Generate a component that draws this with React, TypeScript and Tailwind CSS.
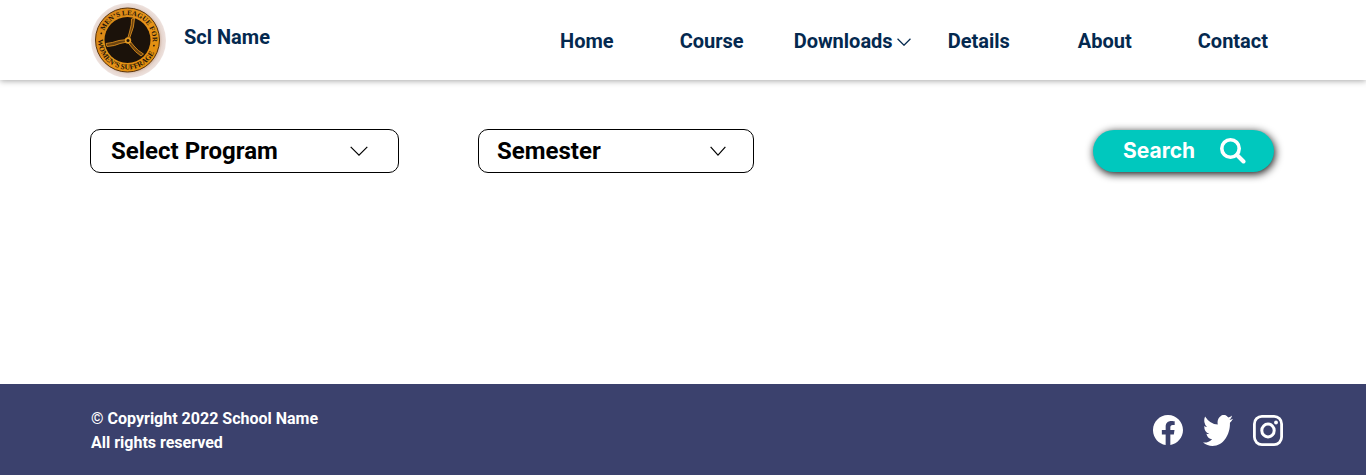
import { BsFacebook, BsTwitter } from "react-icons/bs";

function Chevron({ className }: { className: string }) {
  return (
    <svg viewBox="0 0 18 10" fill="none" stroke="currentColor" preserveAspectRatio="none" aria-hidden="true" className={className}>
      <path d="M0.7 0.9L9 9.1L17.3 0.9" strokeWidth="1.2" vectorEffect="non-scaling-stroke" />
    </svg>
  );
}

function Logo() {
  return (
    <svg viewBox="0 0 76 76" className="size-[76px] shrink-0" role="img" aria-label="Men's League for Women's Suffrage">
      <defs>
        <radialGradient id="rim">
          <stop offset="0.8" stopColor="#c9ab98" />
          <stop offset="0.9" stopColor="#e6d6cf" />
          <stop offset="1" stopColor="#eee2de" />
        </radialGradient>
        <linearGradient id="disc" x1="0" y1="0" x2="1" y2="1">
          <stop offset="0" stopColor="#cf7f14" />
          <stop offset="0.5" stopColor="#e8951a" />
          <stop offset="1" stopColor="#e08c0a" />
        </linearGradient>
        <path id="arcTop" d="M12.500 38A25 25 0 0 1 62.500 38" />
        <path id="arcBottom" d="M8 38A29.500 29.500 0 0 0 67 38" />
      </defs>
      <circle cx="38.500" cy="38.500" r="37.500" fill="url(#rim)" />
      <circle cx="37.500" cy="38" r="32" fill="url(#disc)" stroke="#5a340b" strokeWidth="1" />
      <circle cx="37.500" cy="38" r="23" fill="#1b120a" />
      <g stroke="#d98b1c" strokeWidth="0.9" fill="#6b430f" strokeLinejoin="round">
        <path d="M37.500 37L39.500 30Q42 22 41.500 17L44.500 16Q44 26 41 32L39 38Z" />
        <path d="M37 37.500L29 38.500Q22 41 16 41.500L17 44.500Q25 44 30 41.500L37 40Z" />
        <path d="M37.500 40L41.500 45Q45 50 51 54L53.500 52Q48 49 44 44L40 39Z" />
      </g>
      <circle cx="38" cy="38.500" r="3.200" fill="#e39a22" />
      <circle cx="38" cy="38.500" r="1.500" fill="#20140a" />
      <g fill="#24150a" fontFamily="Liberation Serif, serif" fontWeight="700" transform="rotate(13 37.500 38)">
        <text textAnchor="middle" fontSize="7">
          <textPath href="#arcTop" startOffset="50%">MEN’S LEAGUE FOR</textPath>
        </text>
        <text textAnchor="middle" fontSize="7.500">
          <textPath href="#arcBottom" startOffset="50%">WOMEN’S SUFFRAGE</textPath>
        </text>
        <circle cx="10.500" cy="37.500" r="0.900" />
        <circle cx="64.500" cy="37.500" r="0.900" />
      </g>
    </svg>
  );
}

function Instagram() {
  return (
    <svg viewBox="0 0 30 31" className="h-[31px] w-[30px]" fill="none" stroke="currentColor" aria-hidden="true">
      <rect x="1.400" y="1.400" width="27.200" height="28.200" rx="7.500" strokeWidth="2.800" />
      <ellipse cx="15" cy="15.500" rx="6.200" ry="6.400" strokeWidth="3" />
      <circle cx="23" cy="7.500" r="1.900" fill="currentColor" stroke="none" />
    </svg>
  );
}

export default function App() {
  return (
    <div className="flex min-h-screen flex-col bg-white font-['Roboto',sans-serif]">
      <header className="flex h-20 items-center justify-between pr-[65px] pl-[90px] text-xl font-bold text-[#04294f] shadow-[0_1px_6px_rgba(0,0,0,0.35)]">
        <a href="#home" className="flex items-center gap-[18px]">
          <Logo />
          <span className="pb-1.5 whitespace-nowrap">Scl Name</span>
        </a>
        <nav className="flex items-center pt-0.5">
          <a href="#home" className="px-[33px]">Home</a>
          <a href="#course" className="px-[33px]">Course</a>
          <a href="#downloads" className="flex items-center gap-1 pr-1 pl-[17px]">
            Downloads
            <Chevron className="mt-0.5 h-2 w-3.5" />
          </a>
          <a href="#details" className="pr-[35px] pl-[33px]">Details</a>
          <a href="#about" className="px-[33px]">About</a>
          <a href="#contact" className="px-[33px]">Contact</a>
        </nav>
      </header>

      <main className="flex flex-1 items-start pt-[49px] pr-[92px] pb-12 pl-[90px]">
        <form className="flex flex-1 items-center" onSubmit={(e) => e.preventDefault()}>
          <div className="relative mr-[79px] w-[309px]">
            <select aria-label="Select Program" className="h-11 w-full appearance-none rounded-[10px] border border-black bg-white pl-5 text-2xl font-bold text-black">
              <option>Select Program</option>
            </select>
            <Chevron className="pointer-events-none absolute top-[17px] right-[31px] h-2.5 w-[18px]" />
          </div>
          <div className="relative w-[276px]">
            <select aria-label="Semester" className="h-11 w-full appearance-none rounded-[10px] border border-black bg-white pl-[18px] text-2xl font-bold text-black">
              <option>Semester</option>
            </select>
            <Chevron className="pointer-events-none absolute top-[17px] right-7 h-2.5 w-4" />
          </div>
          <button type="submit" className="ml-auto flex h-[42px] w-[181px] items-center justify-between rounded-full bg-[#00c8be] pr-7 pl-[30px] font-['Inter',sans-serif] text-[21px] font-bold text-white shadow-[1px_2px_8px_rgba(0,0,0,0.95)]">
            Search
            <svg viewBox="0 0 26 26" className="size-[26px]" fill="none" stroke="currentColor" aria-hidden="true">
              <circle cx="10.500" cy="10.500" r="8.700" strokeWidth="3.600" />
              <path d="M17 17L23.500 23.500" strokeWidth="4" strokeLinecap="round" />
            </svg>
          </button>
        </form>
      </main>

      <footer className="flex items-center justify-between bg-[#3b416d] pt-[23px] pr-[83px] pb-5 pl-[91px] text-white">
        <p className="font-bold leading-6">
          © Copyright 2022 School Name
          <br />
          All rights reserved
        </p>
        <div className="flex items-center gap-5 pb-0.5">
          <a href="#facebook" aria-label="Facebook"><BsFacebook size={30} /></a>
          <a href="#twitter" aria-label="Twitter">
            <BsTwitter viewBox="0 2 16 13" preserveAspectRatio="none" className="h-[31px] w-[30px]" />
          </a>
          <a href="#instagram" aria-label="Instagram"><Instagram /></a>
        </div>
      </footer>
    </div>
  );
}
